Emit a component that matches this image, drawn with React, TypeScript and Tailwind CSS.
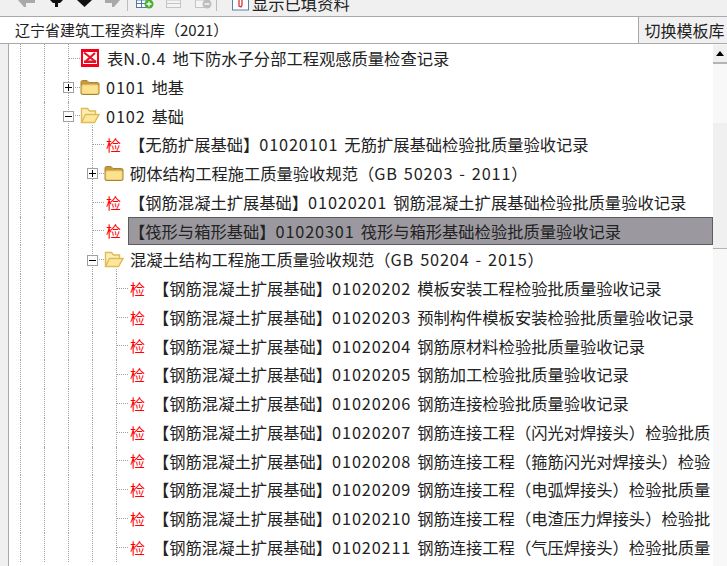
import type { ReactElement } from "react";

type RowKind = "form" | "closed" | "open" | "check";

type TreeRowData = {
	depth: number;
	kind: RowKind;
	text: string;
	selected?: boolean;
};

const rebar = "【钢筋混凝土扩展基础】";

const rows: TreeRowData[] = [
	{ depth: 2, kind: "form", text: "表N.0.4 地下防水子分部工程观感质量检查记录" },
	{ depth: 2, kind: "closed", text: "0101 地基" },
	{ depth: 2, kind: "open", text: "0102 基础" },
	{ depth: 3, kind: "check", text: "【无筋扩展基础】01020101 无筋扩展基础检验批质量验收记录" },
	{ depth: 3, kind: "closed", text: "砌体结构工程施工质量验收规范（GB 50203 - 2011）" },
	{ depth: 3, kind: "check", text: `${rebar}01020201 钢筋混凝土扩展基础检验批质量验收记录` },
	{ depth: 3, kind: "check", text: "【筏形与箱形基础】01020301 筏形与箱形基础检验批质量验收记录", selected: true },
	{ depth: 3, kind: "open", text: "混凝土结构工程施工质量验收规范（GB 50204 - 2015）" },
	{ depth: 4, kind: "check", text: `${rebar}01020202 模板安装工程检验批质量验收记录` },
	{ depth: 4, kind: "check", text: `${rebar}01020203 预制构件模板安装检验批质量验收记录` },
	{ depth: 4, kind: "check", text: `${rebar}01020204 钢筋原材料检验批质量验收记录` },
	{ depth: 4, kind: "check", text: `${rebar}01020205 钢筋加工检验批质量验收记录` },
	{ depth: 4, kind: "check", text: `${rebar}01020206 钢筋连接检验批质量验收记录` },
	{ depth: 4, kind: "check", text: `${rebar}01020207 钢筋连接工程（闪光对焊接头）检验批质` },
	{ depth: 4, kind: "check", text: `${rebar}01020208 钢筋连接工程（箍筋闪光对焊接头）检验` },
	{ depth: 4, kind: "check", text: `${rebar}01020209 钢筋连接工程（电弧焊接头）检验批质量` },
	{ depth: 4, kind: "check", text: `${rebar}01020210 钢筋连接工程（电渣压力焊接头）检验批` },
	{ depth: 4, kind: "check", text: `${rebar}01020211 钢筋连接工程（气压焊接头）检验批质量` },
];

// latin runs sit a little wider than the CJK font's own digits
function Label({ text }: { text: string }): ReactElement {
	const parts = text.split(/([\x20-\x7e]+)/);
	return (
		<>
			{parts.map((part, i) =>
				i % 2 === 1 ? (
					<span key={i} className="tracking-[0.85px] [word-spacing:1.5px]">
						{part}
					</span>
				) : (
					part
				),
			)}
		</>
	);
}

function FolderClosed(): ReactElement {
	return (
		<svg width="20" height="17" viewBox="0 0 20 17" className="shrink-0">
			<path d="M1 14V3q0-1.5 1.5-1.5h4.5l2 2h8.5q1.5 0 1.5 1.5v9q0 1.5-1.5 1.5h-15Q1 15.5 1 14z" fill="#c79a3c" stroke="#a98232" />
			<rect x="2" y="6" width="16" height="8.5" rx="1" fill="#fbe28e" stroke="#f0cf72" />
		</svg>
	);
}

function FolderOpen(): ReactElement {
	return (
		<svg width="20" height="17" viewBox="0 0 20 17" className="shrink-0">
			<path d="M1.5 15.5V1.5h6l2 2.5h6V8" fill="#fdeeb4" stroke="#e0bb58" strokeWidth="1.4" />
			<path d="M1.5 15.5L5.5 7.5H19l-4.5 8z" fill="#fde79a" stroke="#e0bb58" strokeWidth="1.4" />
		</svg>
	);
}

function FormIcon(): ReactElement {
	return (
		<svg width="18" height="18" viewBox="0 0 18 18" className="shrink-0">
			<rect width="18" height="18" fill="#f5001a" />
			<rect x="2" y="3" width="14" height="12" fill="#fff" />
			<path d="M3 3.5L15 13M14 4L5 12" stroke="#ee1022" strokeWidth="2.2" />
			<rect x="3" y="11.5" width="12" height="2.5" fill="#ee1022" />
		</svg>
	);
}

function ExpandBox({ open }: { open: boolean }): ReactElement {
	return (
		<span className="absolute left-[-5px] top-1/2 mt-[-5px] flex h-[11px] w-[11px] items-center justify-center border border-[#a0a0a0] bg-white">
			<span className="relative h-px w-[7px] bg-black">
				{!open && <span className="absolute left-[3px] top-[-3px] h-[7px] w-px bg-black" />}
			</span>
		</span>
	);
}

function TreeRow({ row }: { row: TreeRowData }): ReactElement {
	const isFolder = row.kind === "closed" || row.kind === "open";
	let labelClass = "ml-[-2px] pl-[2px]";
	if (isFolder) labelClass = "ml-[-2px] pl-[8px]";
	if (row.kind === "form") labelClass = "ml-[-2px] pl-[10px]";
	if (row.selected) labelClass = "ml-[-1px] border border-[#5c5c5c] bg-[#9b999f]";
	return (
		<div className="flex h-[28.75px] shrink-0 items-center">
			{Array.from({ length: row.depth }).map((_, i) => (
				<div key={i} className="ml-[11px] h-full w-[13px] border-l border-dotted border-[#a0a0a0]" />
			))}
			<div className="relative ml-[11px] flex h-full min-w-0 flex-1 items-center">
				<div className="absolute left-0 top-0 h-full border-l border-dotted border-[#a0a0a0]" />
				<div className="h-px w-[12px] shrink-0 border-t border-dotted border-[#a0a0a0]" />
				{isFolder && <ExpandBox open={row.kind === "open"} />}
				{row.kind === "open" && (
					<div className="absolute bottom-0 left-[24px] h-[5px] border-l border-dotted border-[#a0a0a0]" />
				)}
				{row.kind === "check" && (
					<span className="ml-[2px] w-[23px] shrink-0 text-[15px] leading-none text-[#ff0000]">检</span>
				)}
				{row.kind === "closed" && <FolderClosed />}
				{row.kind === "open" && <FolderOpen />}
				{row.kind === "form" && (
					<span className="ml-[1px]">
						<FormIcon />
					</span>
				)}
				<div
					className={`flex h-[28px] min-w-0 flex-1 items-center overflow-hidden whitespace-pre text-[16.3px] text-[#222] ${labelClass}`}
				>
					<span>
						<Label text={row.text} />
					</span>
				</div>
			</div>
		</div>
	);
}

function Toolbar(): ReactElement {
	return (
		<div className="flex h-[16px] shrink-0 items-start overflow-hidden bg-[#f0f0f0]">
			<svg width="232" height="16" viewBox="0 0 232 16" className="shrink-0">
				<path d="M18 0h17v3H26v4h-2z" fill="#a9a9a9" />
				<path d="M50 0h13l-3 3h-2v4h-3V3h-2z" fill="#111" />
				<path d="M77 0h15l-7.5 7z" fill="#111" />
				<path d="M105 0h15l-6 7h-2V3h-7z" fill="#a9a9a9" />
				<rect x="127" y="0" width="1" height="11" fill="#bdbdbd" />
				<rect x="136.500" y="0" width="11" height="7.500" fill="#fff" stroke="#4f78a8" />
				<path d="M136 3.500h12M141.500 0v8" stroke="#4f78a8" />
				<circle cx="149" cy="4" r="4.500" fill="#4caf32" />
				<path d="M146.500 4h5M149 1.500v5" stroke="#fff" strokeWidth="1.300" />
				<rect x="166.500" y="0" width="14" height="7.500" fill="#f4f4f4" stroke="#c4c4c4" />
				<path d="M166 3.500h15" stroke="#c4c4c4" />
				<rect x="195.500" y="0" width="10" height="7.500" fill="#f4f4f4" stroke="#c4c4c4" />
				<circle cx="207" cy="4" r="4.500" fill="#bdbdbd" />
				<path d="M204.500 4h5" stroke="#fff" strokeWidth="1.300" />
				<rect x="216" y="0" width="1" height="11" fill="#bdbdbd" />
			</svg>
			<svg width="18" height="11" viewBox="0 0 18 11" className="shrink-0">
				<rect x="0.500" y="-4" width="16" height="14" fill="#fff" stroke="#5a7ea8" />
				<path d="M7 0v6l2 1 1-2V0" fill="#fff" stroke="#d8343a" strokeWidth="1.300" />
			</svg>
			<span className="ml-[2px] mt-[-9px] text-[16.3px] leading-[24px] text-[#222]">显示已填资料</span>
		</div>
	);
}

export default function App(): ReactElement {
	return (
		<div className="flex h-[566px] w-[727px] flex-col overflow-hidden bg-[#f0f0f0] font-['Noto_Sans_CJK_SC',sans-serif]">
			<Toolbar />
			<div className="flex h-[28px] shrink-0 border-y border-[#a9a9a9] bg-white pl-[10px]">
				<div className="flex min-w-0 flex-1 items-center pl-[5px] text-[15px] text-[#222]">辽宁省建筑工程资料库（2021）</div>
				<div className="flex w-[89px] items-center justify-center border-l border-[#a9a9a9] bg-[#f0f0f0] pl-[3px] text-[16px] text-[#222]">
					切换模板库
				</div>
			</div>
			<div className="flex min-h-0 flex-1 pl-[8px]">
				<div className="flex min-w-0 flex-1 border-l border-[#a9a9a9] bg-white">
					<div className="flex min-w-0 flex-1 flex-col overflow-hidden">
						{rows.map((row) => (
							<TreeRow key={row.text} row={row} />
						))}
					</div>
					<div className="flex w-[14px] shrink-0 flex-col bg-[#f8f8f8] pt-px">
						<div className="flex h-[19px] shrink-0 items-center justify-center border-b-2 border-[#b4b4b4] bg-[#f0f0f0]">
							<div className="h-0 w-0 border-x-[4px] border-b-[5px] border-x-transparent border-b-black" />
						</div>
						<div className="h-[59px] shrink-0" />
						<div className="h-[126px] shrink-0 border-b border-[#b4b4b4] bg-[#f0f0f0]" />
						<div className="flex-1" />
					</div>
				</div>
			</div>
		</div>
	);
}
